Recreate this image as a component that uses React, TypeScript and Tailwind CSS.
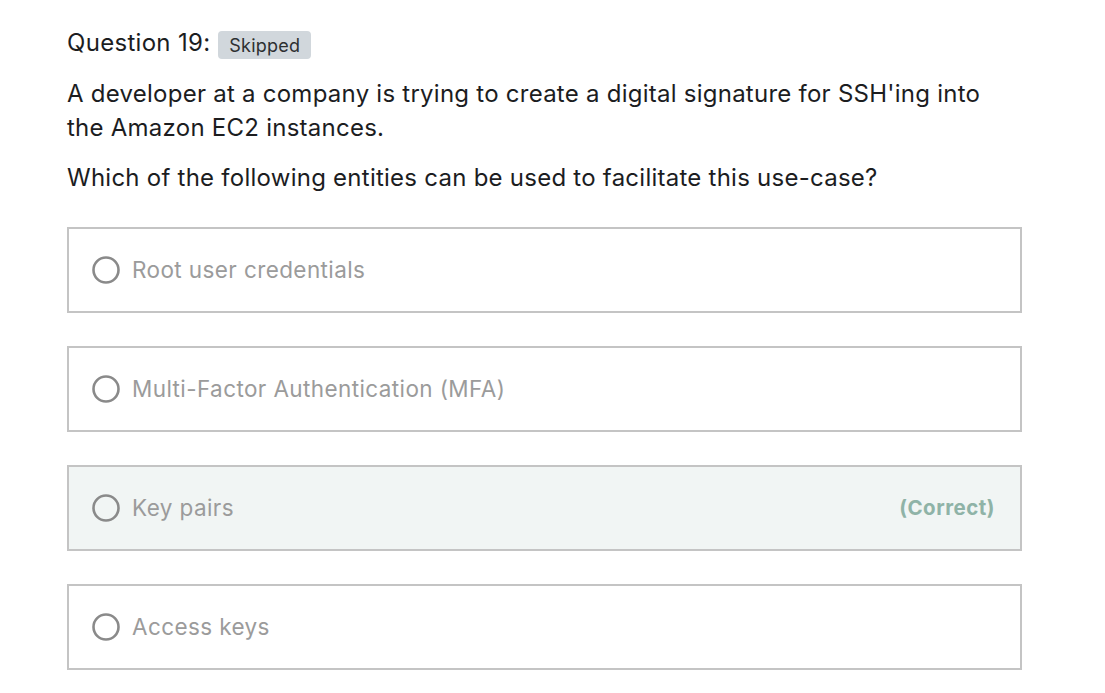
import React from "react";

const options = [
  { label: "Root user credentials", correct: false },
  { label: "Multi-Factor Authentication (MFA)", correct: false },
  { label: "Key pairs", correct: true },
  { label: "Access keys", correct: false },
];

function Radio() {
  return (
    <svg width="30" height="30" viewBox="0 0 30 30" className="shrink-0 -ml-[1px]">
      <circle cx="15" cy="15" r="12.5" fill="none" stroke="#8a8a8a" strokeWidth="2.6" />
    </svg>
  );
}

export default function App() {
  return (
    <div
      className="min-h-screen bg-white pl-[67px] pt-[27px] w-[1105px]"
      style={{ fontFamily: "Inter, 'Noto Sans', sans-serif" }}
    >
      <div className="flex items-center gap-[8px]">
        <span className="text-[24px] tracking-[0.3px] text-[#1c1d1f] leading-[32px]">Question 19:</span>
        <span className="text-[18px] tracking-[0.2px] text-[#2d2f31] bg-[#d1d7dc] rounded-[4px] px-[11px] h-[28px] flex items-center mt-[4px]">
          Skipped
        </span>
      </div>
      <div className="mt-[18px] text-[24px] tracking-[0.25px] leading-[34px] text-[#1c1d1f] w-[930px]">
        A developer at a company is trying to create a digital signature for SSH'ing into the Amazon EC2 instances.
      </div>
      <div className="mt-[16px] text-[24px] tracking-[0.25px] leading-[34px] text-[#1c1d1f]">
        Which of the following entities can be used to facilitate this use-case?
      </div>
      <div className="mt-[32px] flex flex-col gap-[33px] w-[955px]">
        {options.map((o) => (
          <div
            key={o.label}
            className={`h-[86px] border-[2px] border-[#c4c4c4] flex items-center pl-[23px] pr-[25px] ${
              o.correct ? "bg-[#f1f5f4]" : "bg-white"
            }`}
          >
            <Radio />
            <span className="ml-[11px] text-[22.5px] tracking-[0.4px] text-[#9b9b9b] flex-1">{o.label}</span>
            {o.correct && (
              <span className="text-[20.5px] tracking-[0.5px] font-bold text-[#8fb3a7]">(Correct)</span>
            )}
          </div>
        ))}
      </div>
    </div>
  );
}
